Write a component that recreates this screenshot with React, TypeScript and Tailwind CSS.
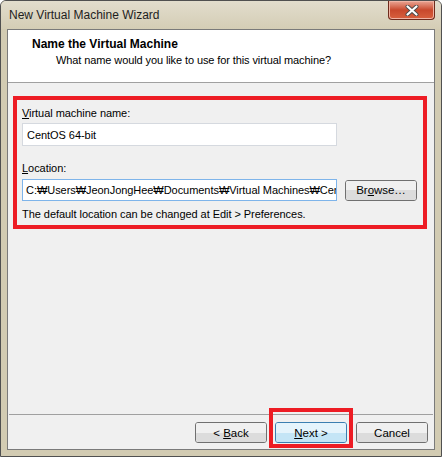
import React from "react";

const font = { fontFamily: '"Liberation Sans", Arial, sans-serif' };

function WinButton({
  children,
  primary = false,
  className = "",
}: {
  children: React.ReactNode;
  primary?: boolean;
  className?: string;
}) {
  return (
    <div
      className={
        "relative flex h-[21px] w-[72px] items-center justify-center overflow-hidden rounded-[3px] border text-[11.5px] leading-[16px] text-black " +
        (primary
          ? "border-[#3c7fb1] shadow-[inset_0_0_0_1px_#a8e4f8] "
          : "border-[#707070] shadow-[inset_0_0_0_1px_#fcfcfc] ") +
        className
      }
    >
      <div className="absolute inset-0 flex flex-col">
        <div className={"flex-1 " + (primary ? "bg-[#e5f4fc]" : "bg-[#f0f0f0]")} />
        <div className={"flex-1 " + (primary ? "bg-[#c4e5f6]" : "bg-[#dcdcdc]")} />
      </div>
      <span className="relative">{children}</span>
    </div>
  );
}

export default function App() {
  return (
    <div style={font} className="h-[457px] w-[442px] bg-white">
      <div className="flex h-[457px] w-[442px] flex-col rounded-t-[6px] border border-[#505050] bg-[#d2cbb2]">
        {/* Title bar */}
        <div className="flex h-[28px] items-start justify-between rounded-t-[5px] bg-gradient-to-b from-[#e2ddcd] to-[#d4cdb5]">
          <div className="pl-[8px] pt-[6px] text-[12px] leading-[16px] text-[#1e1e1e]">
            New Virtual Machine Wizard
          </div>
          <div className="mr-[6px] flex h-[19px] w-[47px] items-center justify-center rounded-b-[4px] border border-t-0 border-[#6e2a1c] bg-gradient-to-b from-[#e9a594] via-[#c8482c] to-[#d8603e] shadow-[inset_0_0_0_1px_#f0b4a4]">
            <svg width="14" height="11" viewBox="0 0 14 11">
              <path d="M2.5 1.5 L11.5 9.5 M11.5 1.5 L2.5 9.5" stroke="#4a4a4a" strokeWidth="4" strokeLinecap="round" />
              <path d="M2.5 1.5 L11.5 9.5 M11.5 1.5 L2.5 9.5" stroke="#ffffff" strokeWidth="2.2" strokeLinecap="round" />
            </svg>
          </div>
        </div>

        {/* Client area */}
        <div className="flex flex-1 flex-col px-[6px] pb-[6px]">
          <div className="flex flex-1 flex-col border border-[#7a7a7a] bg-[#f0f0f0]">
            {/* Header */}
            <div className="h-[53px] border-b border-[#a0a0a0] bg-white">
              <div className="pl-[24px] pt-[6px] text-[12px] font-bold leading-[16px] text-black">
                Name the Virtual Machine
              </div>
              <div className="pl-[48px] text-[11px] leading-[16px] tracking-[-0.1px] text-[#000]">
                What name would you like to use for this virtual machine?
              </div>
            </div>

            {/* Body */}
            <div className="flex-1 pl-[5px] pt-[13px]">
              <div className="flex w-[414px] flex-col border-4 border-[#ed1c24] pb-[3px] pl-[5px] pt-[5px] text-[11px] leading-[16px] tracking-[-0.05px] text-black">
                <div>
                  <span className="underline">V</span>irtual machine name:
                </div>
                <div className="mt-[2px] flex h-[23px] w-[315px] items-center border border-[#d5d9df] bg-white pl-[4px]">
                  CentOS 64-bit
                </div>
                <div className="mt-[14px]">
                  <span className="underline">L</span>ocation:
                </div>
                <div className="mt-[3px] flex items-center">
                  <div className="flex h-[22px] w-[315px] shrink-0 items-center overflow-hidden whitespace-nowrap border border-[#7eb4ea] bg-white pl-[2px]">
                    <span className="mr-[1px] inline-block h-[13px] w-[1px] bg-black" />
                    C:₩Users₩JeonJongHee₩Documents₩Virtual Machines₩CentOS 64-bit
                  </div>
                  <WinButton className="ml-[8px]">
                    Br<span className="underline">o</span>wse…
                  </WinButton>
                </div>
                <div className="mt-[5px]">
                  The default location can be changed at Edit &gt; Preferences.
                </div>
              </div>
            </div>

            {/* Footer */}
            <div className="mx-[1px] h-[2px] border-t border-[#a0a0a0] border-b-white" />
            <div className="flex h-[33px] items-start justify-end pr-[6px] pt-[6px]">
              <WinButton>
                &lt; <span className="underline">B</span>ack
              </WinButton>
              <div className="relative ml-[8px]">
                <WinButton primary>
                  <span className="underline">N</span>ext &gt;
                </WinButton>
                <div className="absolute -bottom-[5px] -left-[6px] -right-[6px] -top-[14px] border-4 border-[#ed1c24]" />
              </div>
              <WinButton className="ml-[9px]">Cancel</WinButton>
            </div>
          </div>
        </div>
      </div>
    </div>
  );
}
